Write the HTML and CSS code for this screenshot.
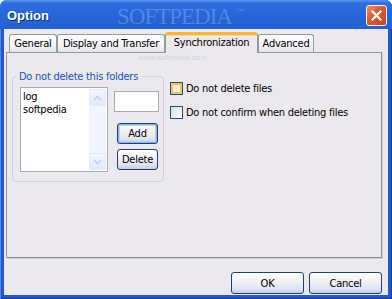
FILE: index.html
```html
<!DOCTYPE html>
<html lang="en">
<head>
    <meta charset="UTF-8">
    <meta name="viewport" content="width=device-width, initial-scale=1.0">
    <title>Option</title>
    <link rel="stylesheet" href="styles.css">
</head>
<body>
    <div class="window">
        <div class="titlebar">
            <span class="title">Option</span>
            <span class="close">
                <svg width="11" height="11" viewBox="0 0 11 11">
                    <path d="M1.5 1.5 L9.5 9.5 M9.5 1.5 L1.5 9.5" stroke="#fff" stroke-width="2.2" stroke-linecap="square"/>
                </svg>
            </span>
        </div>

        <div class="client">
            <div class="tabs">
                <div class="tab tab-general">General</div>
                <div class="tab tab-display">Display and Transfer</div>
                <div class="tab tab-sync active">Synchronization</div>
                <div class="tab tab-advanced">Advanced</div>
            </div>

            <div class="panel">
                <fieldset class="group">
                    <legend>Do not delete this folders</legend>
                    <div class="listbox">
                        <ul class="items">
                            <li>log</li>
                            <li>softpedia</li>
                        </ul>
                        <div class="scrollbar">
                            <span class="scroll-btn">
                                <svg width="9" height="6" viewBox="0 0 9 6"><path d="M1 5 L4.5 1.5 L8 5" fill="none" stroke="#c3d0ee" stroke-width="1.6"/></svg>
                            </span>
                            <span class="scroll-track"></span>
                            <span class="scroll-btn">
                                <svg width="9" height="6" viewBox="0 0 9 6"><path d="M1 1 L4.5 4.5 L8 1" fill="none" stroke="#c3d0ee" stroke-width="1.6"/></svg>
                            </span>
                        </div>
                    </div>
                    <div class="side">
                        <div class="textbox"></div>
                        <button class="btn btn-small focused">Add</button>
                        <button class="btn btn-small">Delete</button>
                    </div>
                </fieldset>

                <div class="options">
                    <label class="check"><span class="box hover"></span>Do not delete files</label>
                    <label class="check"><span class="box"></span>Do not confirm when deleting files</label>
                </div>
            </div>

            <div class="footer">
                <button class="btn btn-wide">OK</button>
                <button class="btn btn-wide">Cancel</button>
            </div>
        </div>

        <!-- watermark lies over the title bar and the panel -->
        <div class="watermark">SOFTPEDIA<sup>™</sup></div>
        <div class="watermark-url">www.softpedia.com</div>
    </div>
</body>
</html>
```

FILE: styles.css
```css
body {
    margin: 0;
    background: #ffffff;
    font-family: "DejaVu Sans Condensed", "DejaVu Sans", sans-serif;
    font-size: 11px;
    letter-spacing: -0.25px;
    color: #000;
}
.window {
    position: relative;
    width: 392px;
    height: 299px;
    box-sizing: border-box;
    display: flex;
    flex-direction: column;
    background: #2158cf;
    border-radius: 7px 7px 0 0;
    box-shadow: inset 1px 0 #5a86e0, inset -1px 0 #0f3aa8, inset 0 -1px #0f3aa8;
    overflow: hidden;
}
.titlebar {
    height: 29px;
    flex: none;
    display: flex;
    align-items: center;
    justify-content: space-between;
    padding: 0 5px 0 7px;
    background: linear-gradient(#5b95ee 0, #2f6ee0 3px, #2765d8 50%, #2460d3 100%);
}
.title {
    color: #fff;
    font-family: "Liberation Sans", Arial, sans-serif;
    font-weight: bold;
    font-size: 13px;
    letter-spacing: 0;
    text-shadow: 1px 1px #0a2a80;
    margin-top: 1px;
}
.close {
    width: 19px;
    height: 19px;
    display: flex;
    align-items: center;
    justify-content: center;
    border: 1px solid #f4f4f4;
    border-radius: 3px;
    background: linear-gradient(135deg, #ec8a66, #d95a30 45%, #c9431d);
    margin-top: 1px;
}
.watermark {
    position: absolute;
    left: 117px;
    top: 4px;
    font-family: "Liberation Serif", serif;
    font-size: 23px;
    letter-spacing: -1px;
    color: rgba(255, 255, 255, 0.22);
    pointer-events: none;
}
.watermark sup {
    font-size: 8px;
    vertical-align: 10px;
    margin-left: 4px;
    font-family: "Liberation Sans", sans-serif;
}
.watermark-url {
    position: absolute;
    left: 138px;
    top: 53px;
    line-height: 9px;
    font-family: "Liberation Sans", sans-serif;
    font-size: 8px;
    letter-spacing: 0;
    color: rgba(150, 150, 165, 0.3);
    pointer-events: none;
}
.client {
    flex: 1;
    margin: 0 4px 4px 4px;
    background: #ebe9ed;
    display: flex;
    flex-direction: column;
}

/* tabs */
.tabs {
    display: flex;
    align-items: flex-end;
    height: 21px;
    margin-top: 3px;
    padding-left: 5px;
    position: relative;
    z-index: 1;
}
.tab {
    box-sizing: border-box;
    height: 18px;
    border: 1px solid #919b9c;
    border-bottom: none;
    border-radius: 3px 3px 0 0;
    background: linear-gradient(#ffffff, #f7f7f9 50%, #e3e4ec);
    display: flex;
    justify-content: center;
    padding-top: 2px;
    margin-bottom: 1px;
}
.tab-general { width: 48px; }
.tab-display { width: 108px; }
.tab-sync { width: 93px; }
.tab-advanced { width: 56px; }
.tab.active {
    height: 21px;
    margin-bottom: 0;
    background: #ebe9ed;
    border-top: 3px solid #f5b642;
    box-shadow: inset 0 1px #ffd77a;
    padding-top: 1px;
}

/* panel */
.panel {
    box-sizing: border-box;
    height: 206px;
    margin: -1px 6px 0 2px;
    border: 1px solid #919b9c;
    border-right-color: #8a9192;
    border-bottom-color: #8a9192;
    box-shadow: 1px 1px #d0d0d8;
    display: flex;
    align-items: flex-start;
}
.group {
    box-sizing: border-box;
    width: 152px;
    min-width: 0;
    height: 112px;
    margin: 17px 0 0 5px;
    padding: 4px 4px 0 7px;
    border: 1px solid #d3d2d8;
    border-radius: 4px;
    display: flex;
    align-items: flex-start;
    gap: 6px;
}
.group legend {
    color: #2050c8;
    padding: 0 3px;
    margin-left: -4px;
}
.listbox {
    box-sizing: border-box;
    width: 88px;
    height: 85px;
    flex: none;
    background: #fff;
    border: 1px solid #a5acb5;
    display: flex;
}
.items {
    list-style: none;
    margin: 0;
    padding: 2px 0 0 2px;
    flex: 1;
    line-height: 13px;
}
.scrollbar {
    width: 17px;
    margin: 1px 1px 1px 0;
    display: flex;
    flex-direction: column;
    background: #f2f5fd;
}
.scroll-btn {
    box-sizing: border-box;
    height: 17px;
    border: 1px solid #e0e8fb;
    border-radius: 2px;
    background: linear-gradient(#f3f6fe, #e1e9fc);
    display: flex;
    align-items: center;
    justify-content: center;
}
.scroll-track {
    flex: 1;
}
.side {
    width: 45px;
    flex: none;
    display: flex;
    flex-direction: column;
    align-items: flex-start;
    padding-top: 4px;
}
.textbox {
    box-sizing: border-box;
    width: 45px;
    height: 21px;
    background: #fff;
    border: 1px solid #a5acb5;
    margin-bottom: 11px;
}

/* buttons */
.btn {
    box-sizing: border-box;
    font: inherit;
    letter-spacing: inherit;
    color: #000;
    border: 1px solid #1f3f78;
    border-radius: 3px;
    background: linear-gradient(#ffffff 0%, #f4f4f8 35%, #dfe3ef 80%, #c2cbe2 100%);
    padding: 0;
}
.btn-small {
    width: 41px;
    height: 21px;
    margin-left: 3px;
    margin-bottom: 5px;
}
.btn.focused {
    box-shadow: inset 0 0 0 1px #8db0ee, inset 0 0 0 2px #b9d0f6;
}
.btn-wide {
    width: 73px;
    height: 22px;
}

/* checkboxes */
.options {
    display: flex;
    flex-direction: column;
    gap: 11px;
    margin: 29px 0 0 6px;
}
.check {
    display: flex;
    align-items: center;
    gap: 3px;
    height: 13px;
}
.box {
    box-sizing: border-box;
    width: 13px;
    height: 13px;
    border: 1px solid #1c5180;
    background: linear-gradient(135deg, #dcdcd7, #ffffff);
}
.box.hover {
    box-shadow: inset 0 0 0 2px #f8c25a;
    background: linear-gradient(135deg, #f6e3b8, #ffffff);
}

.footer {
    display: flex;
    justify-content: flex-end;
    gap: 5px;
    padding: 14px 6px 0 0;
}
```
